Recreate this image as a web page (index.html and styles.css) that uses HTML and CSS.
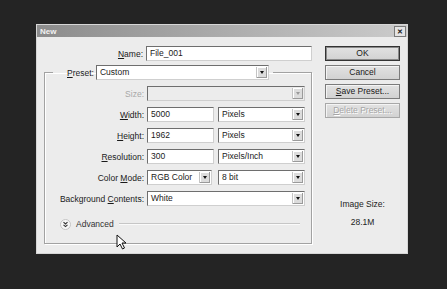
FILE: index.html
```html
<!DOCTYPE html>
<html lang="en">
<head>
    <meta charset="UTF-8">
    <title>New</title>
    <link rel="stylesheet" href="styles.css">
</head>
<body>
    <div class="dialog">
        <div class="titlebar">
            <span class="title">New</span>
            <span class="close">&#x2715;</span>
        </div>
        <div class="body">
            <div class="main">
                <div class="name-row">
                    <span class="label"><u>N</u>ame:</span>
                    <div class="field name-field">File_001</div>
                </div>
                <fieldset class="preset-box">
                    <legend>
                        <span class="legend-label"><u>P</u>reset:</span>
                        <div class="select preset-select">Custom<span class="arrow"></span></div>
                    </legend>

                    <div class="row">
                        <span class="label disabled">Size:</span>
                        <div class="select full disabled"><span class="arrow"></span></div>
                    </div>
                    <div class="row">
                        <span class="label"><u>W</u>idth:</span>
                        <div class="field num">5000</div>
                        <div class="select unit">Pixels<span class="arrow"></span></div>
                    </div>
                    <div class="row">
                        <span class="label"><u>H</u>eight:</span>
                        <div class="field num">1962</div>
                        <div class="select unit">Pixels<span class="arrow"></span></div>
                    </div>
                    <div class="row">
                        <span class="label"><u>R</u>esolution:</span>
                        <div class="field num">300</div>
                        <div class="select unit">Pixels/Inch<span class="arrow"></span></div>
                    </div>
                    <div class="row">
                        <span class="label">Color <u>M</u>ode:</span>
                        <div class="select mode">RGB Color<span class="arrow"></span></div>
                        <div class="select unit">8 bit<span class="arrow"></span></div>
                    </div>
                    <div class="row last">
                        <span class="label">Background <u>C</u>ontents:</span>
                        <div class="select full">White<span class="arrow"></span></div>
                    </div>

                    <div class="advanced">
                        <svg class="adv-icon" width="11" height="11" viewBox="0 0 11 11">
                            <circle cx="5.5" cy="5.5" r="5" fill="#f7f7f7" stroke="#c4c4c4"/>
                            <path d="M3.5 3.2 L5.5 5 L7.5 3.2 M3.5 5.8 L5.5 7.6 L7.5 5.8" fill="none" stroke="#333" stroke-width="1.1"/>
                        </svg>
                        <span class="adv-text">Advanced</span>
                        <span class="adv-line"></span>
                    </div>
                </fieldset>
            </div>

            <div class="side">
                <div class="btn default">OK</div>
                <div class="btn">Cancel</div>
                <div class="btn"><u>S</u>ave Preset...</div>
                <div class="btn disabled"><u>D</u>elete Preset...</div>

                <div class="image-size">
                    <div>Image Size:</div>
                    <div>28.1M</div>
                </div>
            </div>
        </div>
    </div>

    <svg class="cursor" width="12" height="16" viewBox="0 0 12 16">
        <path d="M1 1 L1 13 L4 10 L6.5 15 L8.5 14 L6 9 L10 9 Z" fill="#fff" stroke="#111" stroke-width="1" stroke-linejoin="round"/>
    </svg>
</body>
</html>
```

FILE: styles.css
```css
body {
    margin: 0;
    background: #242424;
    font-family: 'Liberation Sans', Arial, sans-serif;
    font-size: 8.5px;
    color: #1a1a1a;
    height: 289px;
}

u {
    text-decoration: underline;
    text-underline-offset: 1px;
}

.dialog {
    position: relative;
    top: 24px;
    left: 36px;
    width: 372px;
    height: 230px;
    background: #ececec;
    box-sizing: border-box;
    border: 1px solid #d6d6d6;
}

.titlebar {
    height: 12px;
    background: linear-gradient(to right, #8c8c8c, #cbcbcb);
    display: flex;
    align-items: center;
    justify-content: space-between;
    padding: 0 1px 0 3px;
}

.title {
    color: #f2f2f2;
    font-weight: bold;
    font-size: 8px;
}

.close {
    width: 10px;
    height: 9px;
    line-height: 9px;
    text-align: center;
    font-size: 7px;
    font-weight: bold;
    background: #e4e4e4;
    border: 1px solid #7a7a7a;
}

.body {
    display: flex;
    padding: 9px 7px 0 7px;
}

.main {
    width: 268px;
}

.side {
    width: 75px;
    margin-left: 13px;
    display: flex;
    flex-direction: column;
    gap: 4px;
}

/* text boxes and drop-downs */

.label {
    width: 99px;
    padding-right: 3px;
    text-align: right;
    flex-shrink: 0;
}

.label.disabled {
    color: #a8a8a8;
}

.field, .select {
    height: 15px;
    box-sizing: border-box;
    background: #fff;
    border: 1px solid;
    border-color: #6e6e6e #cfcfcf #cfcfcf #6e6e6e;
    padding-left: 3px;
    line-height: 13px;
    position: relative;
}

.select .arrow {
    position: absolute;
    right: 1px;
    top: 1px;
    width: 10px;
    height: 11px;
    background: #dcdcdc;
    border-left: 1px solid #c4c4c4;
    box-shadow: inset -1px -1px 0 #9a9a9a, inset 1px 1px 0 #fff;
}

.select .arrow::after {
    content: '';
    position: absolute;
    left: 3px;
    top: 4px;
    border-left: 2.5px solid transparent;
    border-right: 2.5px solid transparent;
    border-top: 3px solid #111;
}

.select.disabled {
    background: #ececec;
}

.select.disabled .arrow::after {
    border-top-color: #9a9a9a;
}

.name-row {
    display: flex;
    align-items: center;
}

.name-field {
    width: 166px;
}

/* preset group */

.preset-box {
    margin: 4px 0 0;
    padding: 0 0 13px;
    border: 1px solid #a2a2a2;
    box-shadow: 1px 1px 0 #fff, inset 1px 1px 0 #fff;
    display: flex;
    flex-direction: column;
    gap: 6px;
}

.preset-box legend {
    margin-left: 8px;
    padding: 0 4px 0 14px;
    display: flex;
    align-items: center;
    margin-bottom: 6px;
}

.legend-label {
    margin-right: 2px;
}

.preset-select {
    width: 173px;
}

.row {
    display: flex;
    align-items: center;
}

.row.last {
    margin-bottom: 6px;
}

.full {
    width: 158px;
}

.num {
    width: 67px;
    margin-right: 4px;
}

.mode {
    width: 65px;
    margin-right: 6px;
}

.unit {
    width: 87px;
}

.advanced {
    display: flex;
    align-items: center;
    height: 12px;
    padding-left: 15px;
    padding-right: 11px;
}

.adv-text {
    margin-left: 5px;
    color: #333;
}

.adv-line {
    flex: 1;
    margin-left: 5px;
    border-top: 1px solid #c6c6c6;
    border-bottom: 1px solid #fafafa;
}

/* buttons */

.btn {
    height: 15px;
    box-sizing: border-box;
    line-height: 13px;
    text-align: center;
    background: linear-gradient(#e2e2e2, #d2d2d2);
    border: 1px solid #7b7b7b;
    box-shadow: inset 1px 1px 0 #f4f4f4;
    color: #1a1a1a;
}

.btn.default {
    border: 1px solid #333;
    box-shadow: inset 0 0 0 1px #8a8a8a;
}

.btn.disabled {
    color: #a6a6a6;
    text-shadow: 1px 1px 0 #fff;
    border-color: #a8a8a8;
}

.image-size {
    margin-top: 73px;
    text-align: center;
    line-height: 18px;
    color: #222;
}

.cursor {
    position: absolute;
    left: 116px;
    top: 234px;
}
```
